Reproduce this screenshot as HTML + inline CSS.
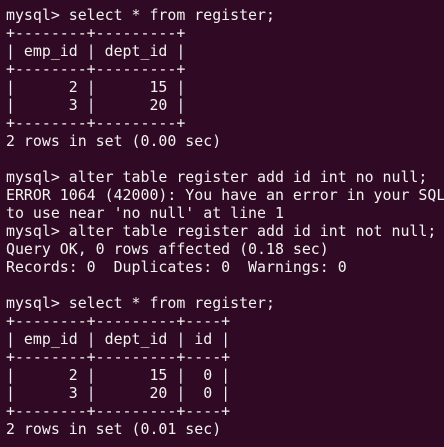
<!DOCTYPE html>
<html><head><style>
html,body{margin:0;padding:0;background:#300a24;width:444px;height:447px;overflow:hidden}
pre{margin:0;padding:6px 0 0 6px;font-family:"DejaVu Sans Mono","Liberation Mono",monospace;font-size:14.9px;line-height:18px;color:#f2f2f0;white-space:pre}
</style></head><body><pre>mysql&gt; select * from register;
+--------+---------+
| emp_id | dept_id |
+--------+---------+
|      2 |      15 |
|      3 |      20 |
+--------+---------+
2 rows in set (0.00 sec)

mysql&gt; alter table register add id int no null;
ERROR 1064 (42000): You have an error in your SQL
to use near 'no null' at line 1
mysql&gt; alter table register add id int not null;
Query OK, 0 rows affected (0.18 sec)
Records: 0  Duplicates: 0  Warnings: 0

mysql&gt; select * from register;
+--------+---------+----+
| emp_id | dept_id | id |
+--------+---------+----+
|      2 |      15 |  0 |
|      3 |      20 |  0 |
+--------+---------+----+
2 rows in set (0.01 sec)</pre></body></html>
